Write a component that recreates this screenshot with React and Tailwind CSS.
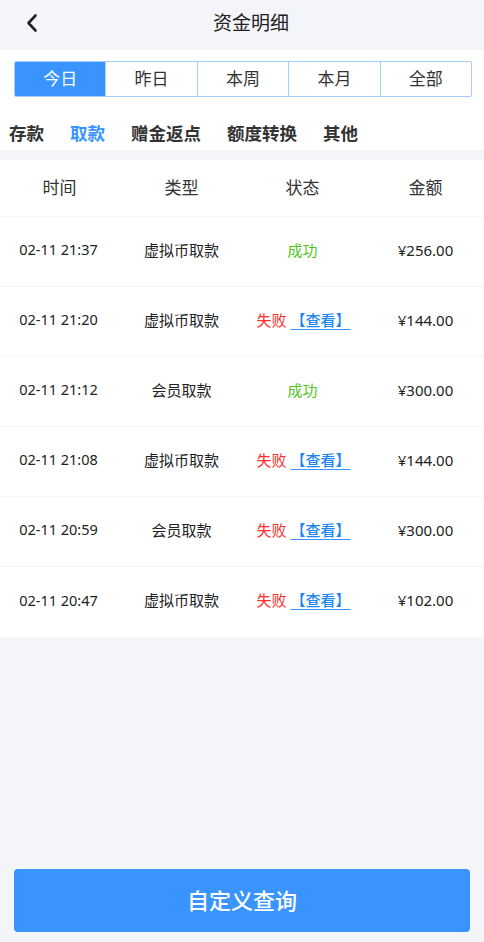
import React from "react";

const rows = [
  { t: "02-11 21:37", type: "虚拟币取款", ok: true, amt: "¥256.00" },
  { t: "02-11 21:20", type: "虚拟币取款", ok: false, amt: "¥144.00" },
  { t: "02-11 21:12", type: "会员取款", ok: true, amt: "¥300.00" },
  { t: "02-11 21:08", type: "虚拟币取款", ok: false, amt: "¥144.00" },
  { t: "02-11 20:59", type: "会员取款", ok: false, amt: "¥300.00" },
  { t: "02-11 20:47", type: "虚拟币取款", ok: false, amt: "¥102.00" },
];

const periods = ["今日", "昨日", "本周", "本月", "全部"];
const cats = ["存款", "取款", "赠金返点", "额度转换", "其他"];

export default function App() {
  return (
    <div
      className="w-[484px] h-[942px] bg-[#f4f5f8] flex flex-col text-[#333]"
      style={{ fontFamily: '"Noto Sans", "Noto Sans CJK SC", sans-serif' }}
    >
      <div className="h-[50px] relative flex items-center justify-center shrink-0">
        <svg
          className="absolute left-[25px] top-[13px]"
          width="14"
          height="20"
          viewBox="0 0 14 20"
          fill="none"
        >
          <path d="M10.5 2.5 L3.5 10 L10.5 17.5" stroke="#222" strokeWidth="2.6" strokeLinecap="round" strokeLinejoin="round" />
        </svg>
        <span className="text-[19px] text-[#222] leading-none -mt-[3px] ml-[18px]">资金明细</span>
      </div>
      <div className="bg-white h-[100px] shrink-0 flex flex-col">
        <div className="ml-[14px] mr-[12px] mt-[11px] h-[36px] flex border border-[#a8cdfd] rounded-[2px] overflow-hidden">
          {periods.map((p, i) => (
            <div
              key={p}
              className={
                "flex-1 flex items-center justify-center text-[17px] " +
                (i === 0 ? "bg-[#3994ff] text-white" : "text-[#333]") +
                (i > 0 ? " border-l border-[#a8cdfd]" : "")
              }
            >
              {p}
            </div>
          ))}
        </div>
        <div className="flex items-center gap-[26px] pl-[9px] mt-[28px]">
          {cats.map((c, i) => (
            <span
              key={c}
              className={"text-[17.5px] font-bold leading-none " + (i === 1 ? "text-[#3994ff]" : "text-[#333]")}
            >
              {c}
            </span>
          ))}
        </div>
      </div>
      <div className="h-[10px] shrink-0" />
      <div className="bg-white shrink-0">
        <div className="h-[57px] grid grid-cols-4 items-center text-[17px] text-[#333] border-b border-[#f4f4f4]">
          <span className="text-center -ml-[2px]">时间</span>
          <span className="text-center">类型</span>
          <span className="text-center">状态</span>
          <span className="text-center ml-[4px]">金额</span>
        </div>
        {rows.map((r, i) => (
          <div
            key={i}
            className={
              "h-[70px] pb-[3px] grid grid-cols-4 items-center text-[14.5px] text-[#222] " +
              (i < rows.length - 1 ? "border-b border-[#f4f4f4]" : "")
            }
          >
            <span className="text-center -ml-[4px]">{r.t}</span>
            <span className="text-center text-[15px]">{r.type}</span>
            <span className="text-center text-[15px]">
              {r.ok ? (
                <span className="text-[#52c41a]">成功</span>
              ) : (
                <span className="ml-[2px]">
                  <span className="text-[#ff2d2d]">失败</span>
                  <span className="text-[#1d85f0] font-medium underline underline-offset-[3px] decoration-[#3994ff] ml-[4px]">【查看】</span>
                </span>
              )}
            </span>
            <span className="text-center ml-[4px] text-[15px]">{r.amt}</span>
          </div>
        ))}
      </div>
      <div className="flex-1" />
      <div className="px-[14px] pb-[10px] shrink-0">
        <button className="w-full h-[63px] bg-[#3994ff] rounded-[4px] text-white text-[22px] font-medium flex items-center justify-center">
          自定义查询
        </button>
      </div>
    </div>
  );
}
